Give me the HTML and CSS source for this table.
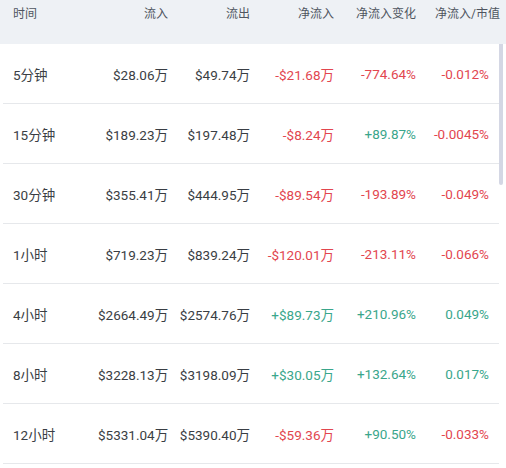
FILE: index.html
```html
<!DOCTYPE html>
<html lang="zh-CN">
<head>
    <meta charset="UTF-8">
    <title>资金流向</title>
    <link rel="stylesheet" href="styles.css">
</head>
<body>
    <div class="flow-table">
        <!-- 表头 -->
        <div class="flow-head">
            <div class="cell first">时间</div>
            <div class="cell">流入</div>
            <div class="cell">流出</div>
            <div class="cell">净流入</div>
            <div class="cell">净流入变化</div>
            <div class="cell last">净流入/市值</div>
        </div>

        <!-- 数据行 -->
        <div class="flow-body">
            <div class="flow-row">
                <div class="cell first">5分钟</div>
                <div class="cell">$28.06万</div>
                <div class="cell">$49.74万</div>
                <div class="cell down">-$21.68万</div>
                <div class="cell down">-774.64%</div>
                <div class="cell down">-0.012%</div>
            </div>
            <div class="flow-row">
                <div class="cell first">15分钟</div>
                <div class="cell">$189.23万</div>
                <div class="cell">$197.48万</div>
                <div class="cell down">-$8.24万</div>
                <div class="cell up">+89.87%</div>
                <div class="cell down">-0.0045%</div>
            </div>
            <div class="flow-row">
                <div class="cell first">30分钟</div>
                <div class="cell">$355.41万</div>
                <div class="cell">$444.95万</div>
                <div class="cell down">-$89.54万</div>
                <div class="cell down">-193.89%</div>
                <div class="cell down">-0.049%</div>
            </div>
            <div class="flow-row">
                <div class="cell first">1小时</div>
                <div class="cell">$719.23万</div>
                <div class="cell">$839.24万</div>
                <div class="cell down">-$120.01万</div>
                <div class="cell down">-213.11%</div>
                <div class="cell down">-0.066%</div>
            </div>
            <div class="flow-row">
                <div class="cell first">4小时</div>
                <div class="cell">$2664.49万</div>
                <div class="cell">$2574.76万</div>
                <div class="cell up">+$89.73万</div>
                <div class="cell up">+210.96%</div>
                <div class="cell up">0.049%</div>
            </div>
            <div class="flow-row">
                <div class="cell first">8小时</div>
                <div class="cell">$3228.13万</div>
                <div class="cell">$3198.09万</div>
                <div class="cell up">+$30.05万</div>
                <div class="cell up">+132.64%</div>
                <div class="cell up">0.017%</div>
            </div>
            <div class="flow-row">
                <div class="cell first">12小时</div>
                <div class="cell">$5331.04万</div>
                <div class="cell">$5390.40万</div>
                <div class="cell down">-$59.36万</div>
                <div class="cell up">+90.50%</div>
                <div class="cell down">-0.033%</div>
            </div>
            <div class="scroll-thumb"></div>
        </div>
    </div>
</body>
</html>
```

FILE: styles.css
```css
body {
    margin: 0;
    padding: 0;
    background: #fff;
    font-family: Roboto, "Noto Sans CJK SC", sans-serif;
    overflow: hidden;
}

.flow-table {
    width: 506px;
    height: 468px;
    overflow: hidden;
}

/* 表头 */
.flow-head {
    display: grid;
    grid-template-columns: 98px 80px 82px 84px 82px 80px;
    height: 44px;
    box-sizing: border-box;
    padding-top: 6px;
    background: #eef1f5;
    color: #4f5560;
    font-size: 12px;
    line-height: 16px;
}

.flow-head .cell {
    text-align: right;
    padding-right: 10px;
    white-space: nowrap;
}

.flow-head .cell.first {
    text-align: left;
    padding-left: 13px;
    padding-right: 0;
}

.flow-head .cell.last {
    padding-right: 6px;
}

/* 数据区 */
.flow-body {
    position: relative;
    margin-left: 3px;
    width: 496px;
}

.flow-row {
    display: grid;
    grid-template-columns: 95px 80px 82px 84px 82px 73px;
    align-items: center;
    height: 60px;
    box-sizing: border-box;
    border-bottom: 1px solid #e6e8eb;
    color: #3a3e44;
    font-size: 13.5px;
}

.flow-row .cell {
    text-align: right;
    padding-right: 10px;
    white-space: nowrap;
}

.flow-row .cell.first {
    text-align: left;
    padding-left: 10px;
    padding-right: 0;
}

.up {
    color: #3aa68b;
}

.down {
    color: #e2464f;
}

.scroll-thumb {
    position: absolute;
    top: 0;
    left: 496px;
    width: 4px;
    height: 141px;
    background: #d4d7e4;
    border-radius: 0 0 2px 2px;
}
```
